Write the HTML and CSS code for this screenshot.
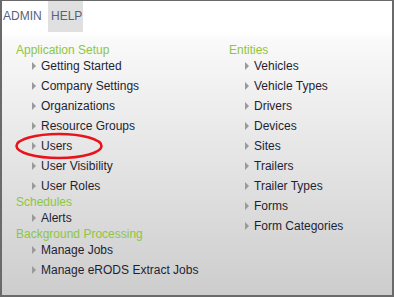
FILE: index.html
```html
<!DOCTYPE html>
<html>
<head>
<meta charset="utf-8">
<link rel="stylesheet" href="styles.css">
</head>
<body>
<div class="panel">
  <div class="tabs">
    <div class="tab tab-active">ADMIN</div>
    <div class="tab tab-help">HELP</div>
  </div>
  <div class="content">
    <div class="col col-left">
      <div class="group">
        <div class="heading">Application Setup</div>
        <ul class="items">
          <li>Getting Started</li>
          <li>Company Settings</li>
          <li>Organizations</li>
          <li>Resource Groups</li>
          <li>Users</li>
          <li>User Visibility</li>
          <li>User Roles</li>
        </ul>
      </div>
      <div class="group">
        <div class="heading">Schedules</div>
        <ul class="items">
          <li>Alerts</li>
        </ul>
      </div>
      <div class="group">
        <div class="heading">Background Processing</div>
        <ul class="items">
          <li>Manage Jobs</li>
          <li>Manage eRODS Extract Jobs</li>
        </ul>
      </div>
    </div>
    <div class="col col-right">
      <div class="group">
        <div class="heading">Entities</div>
        <ul class="items">
          <li>Vehicles</li>
          <li>Vehicle Types</li>
          <li>Drivers</li>
          <li>Devices</li>
          <li>Sites</li>
          <li>Trailers</li>
          <li>Trailer Types</li>
          <li>Forms</li>
          <li>Form Categories</li>
        </ul>
      </div>
    </div>
    <svg class="annot" width="90" height="30" viewBox="0 0 90 30"><ellipse cx="45" cy="15" rx="42.5" ry="12" fill="none" stroke="#e8141c" stroke-width="2.6"/></svg>
  </div>
</div>
</body>
</html>
```
FILE: styles.css
```css
html, body {
  margin: 0;
  padding: 0;
}
body {
  font-family: "Liberation Sans", Arial, sans-serif;
  font-size: 12px;
  background: #fff;
}
.panel {
  width: 394px;
  height: 297px;
  box-sizing: border-box;
  border: 2px solid #6a6a6a;
  border-top-width: 1px;
  display: flex;
  flex-direction: column;
  background: linear-gradient(to bottom, #ffffff 0px, #ffffff 31px, #f9f9f9 40px, #cdcdcd 100%);
}
.tabs {
  display: flex;
  height: 31px;
  background: #fff;
}
.tab {
  line-height: 30px;
  color: #56627a;
  padding: 0 3px 0 1px;
  font-size: 12px;
}
.tab-active {
  width: 40px;
  background: #fff;
}
.tab-help {
  background: #e0e0e0;
  padding: 0 3px 0 3px;
  width: 29px;
  margin-left: 2px;
}
.content {
  position: relative;
  flex: 1;
  display: flex;
  padding: 10px 0 0 14px;
}
.col-left {
  width: 213px;
}
.heading {
  color: #8dc63f;
  line-height: 16px;
}
.items {
  list-style: none;
  margin: 0;
  padding: 0 0 0 15px;
}
.items li {
  color: #1f1f33;
  line-height: 16px;
  padding-left: 10px;
  position: relative;
}
.items li + li {
  margin-top: 4px;
}
.items li::before {
  content: "";
  position: absolute;
  left: 1px;
  top: 4px;
  width: 0;
  height: 0;
  border-left: 4px solid #9a9a9a;
  border-top: 4px solid transparent;
  border-bottom: 4px solid transparent;
}
.annot {
  position: absolute;
  left: 12px;
  top: 99px;
}
```
